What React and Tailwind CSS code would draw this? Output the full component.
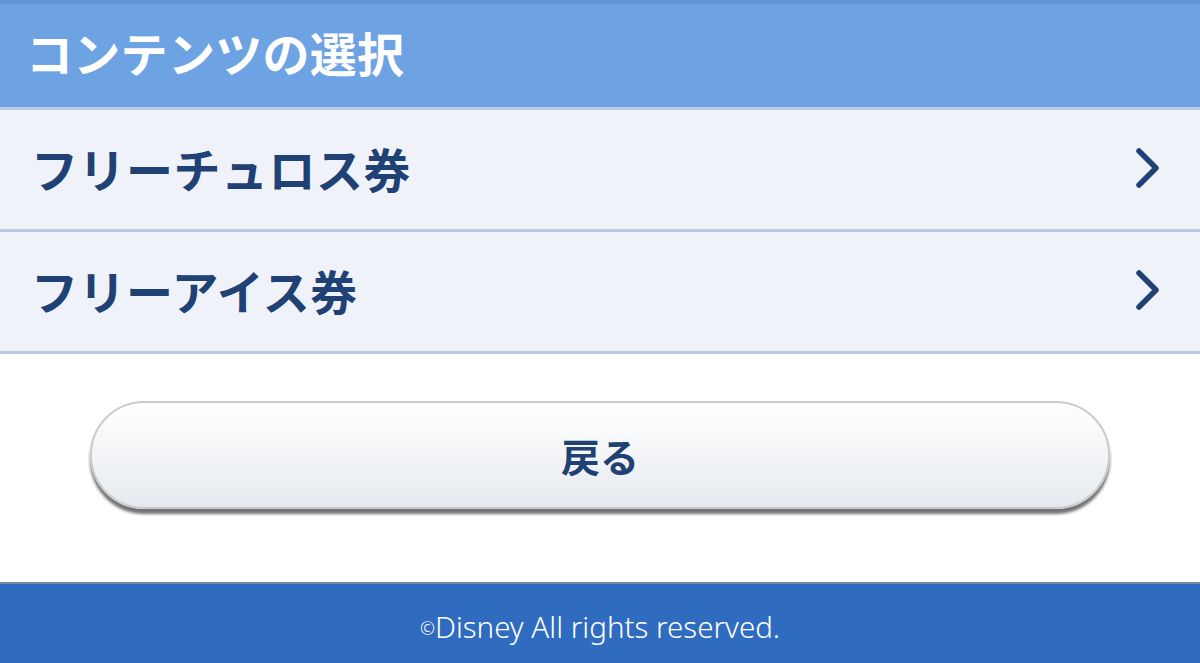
const JP = { fontFamily: '"Noto Sans CJK JP", "Noto Sans", sans-serif' };

const ITEMS = ["フリーチュロス券", "フリーアイス券"];

function Chevron() {
  return (
    <svg width="28" height="42" viewBox="0 0 28 42" fill="none">
      <path
        d="M5 4 L22 21 L5 38"
        stroke="#1f4174"
        strokeWidth="5.5"
        strokeLinecap="round"
        strokeLinejoin="round"
      />
    </svg>
  );
}

export default function App() {
  return (
    <div className="w-[1200px] h-[663px] flex flex-col bg-white overflow-hidden" style={JP}>
      {/* Header */}
      <div className="h-[107px] bg-[#6ea3e3] border-t-[4px] border-[#6295d6] flex items-center pl-[26px] pb-[8px]">
        <h1 className="text-white text-[47px] font-bold leading-none tracking-[0.3px]">
          コンテンツの選択
        </h1>
      </div>

      {/* List */}
      <div className="border-t-[3px] border-[#b9cbe3]">
        {ITEMS.map((label) => (
          <div
            key={label}
            className="h-[122px] bg-[#eff3f9] border-b-[3px] border-[#b9cbe3] flex items-center justify-between pl-[31px] pr-[38px] pb-[4px]"
          >
            <span className="text-[#1f4174] text-[47px] font-bold leading-none tracking-[0.5px]">{label}</span>
            <Chevron />
          </div>
        ))}
      </div>

      {/* Back button */}
      <div className="flex-1 flex items-center justify-center pb-[26px]">
        <button className="w-[1020px] h-[108px] rounded-full border-2 border-[#c9cbcf] bg-gradient-to-b from-white to-[#e6eaef] shadow-[0_5px_3px_rgba(0,0,0,0.55)] flex items-center justify-center">
          <span className="text-[#1f4174] text-[39px] font-bold leading-none">戻る</span>
        </button>
      </div>

      {/* Footer */}
      <div className="h-[81px] bg-[#2f6cbf] border-t-[2px] border-[#7a8aa0] flex items-center justify-center pt-[6px]">
        <span
          className="text-white text-[29.5px] leading-none font-light"
          style={{ fontFamily: '"Noto Sans", "Noto Sans CJK JP", sans-serif' }}
        >
          <span className="text-[18px] align-[3px]">©</span>Disney All rights reserved.
        </span>
      </div>
    </div>
  );
}
